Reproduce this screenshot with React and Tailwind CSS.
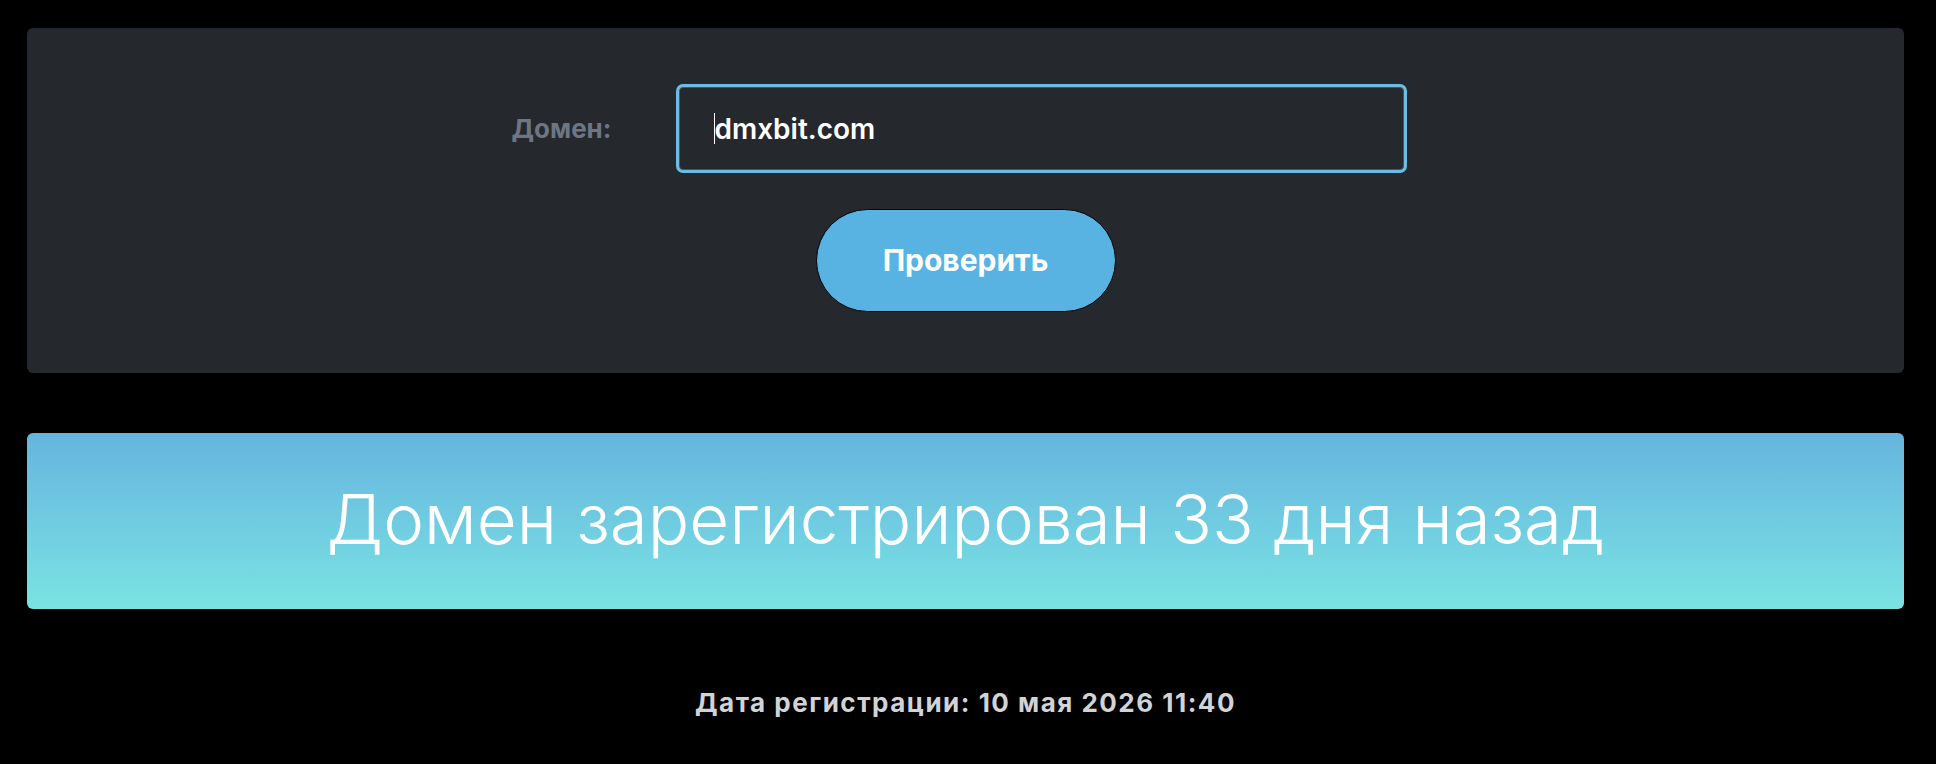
import { useState } from "react";

function App() {
  const [domain, setDomain] = useState("dmxbit.com");

  return (
    <div className="min-h-screen bg-black pl-[27px] pr-[32px] pt-[28px]" style={{ fontFamily: "Inter, 'Noto Sans', sans-serif" }}>
      <div className="flex flex-col items-center rounded-md bg-[#25282d] pt-[59px] pb-[61px]">
        <div className="flex items-center pr-[16px]">
          <label className="w-[101px] text-[26px] font-bold text-[#6e7685]">Домен:</label>
          <div className="relative ml-[66px]">
            <input
              value={domain}
              onChange={(e) => setDomain(e.target.value)}
              className="h-[83px] w-[725px] rounded-[4px] border border-[#4f5258] bg-[#25282d] pl-[35px] text-[28px] font-semibold text-white outline-none ring-[3px] ring-[#6bbde5]"
            />
            <span className="absolute left-[35px] top-[26px] h-[31px] w-[1px] bg-white"></span>
          </div>
        </div>
        <button
          type="button"
          className="mt-[39px] h-[103px] w-[300px] rounded-full border-[1.5px] border-black bg-[#58b3e2] text-[30px] font-bold text-white"
        >
          Проверить
        </button>
      </div>

      <div className="mt-[60px] flex h-[176px] items-center justify-center rounded-md bg-gradient-to-b from-[#66b4de] to-[#7ae3e3]">
        <h1 className="pb-[2px] text-[69px] font-light text-white">Домен зарегистрирован 33 дня назад</h1>
      </div>

      <p className="mt-[74px] text-center text-[26px] font-bold tracking-[1.5px] text-[#d2d3d7]">
        Дата регистрации: 10 мая 2026 11:40
      </p>
    </div>
  );
}

export default App;
